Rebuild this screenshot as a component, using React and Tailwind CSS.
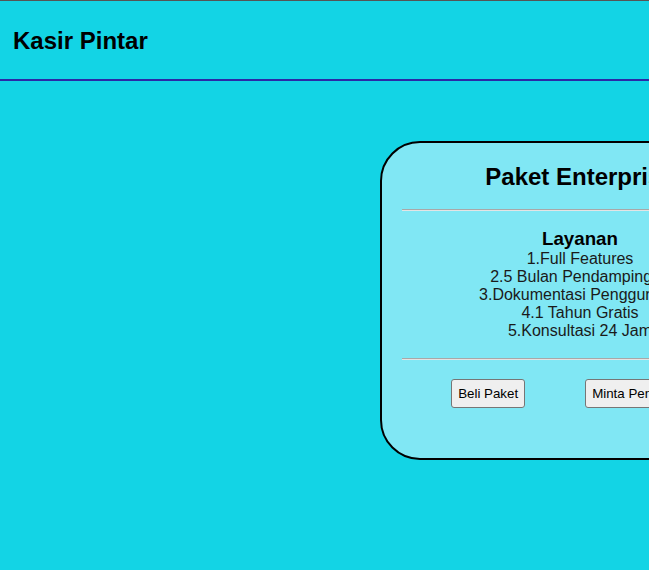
export default function App() {
  const items = [
    "1.Full Features",
    "2.5 Bulan Pendampingan",
    "3.Dokumentasi Penggunaan",
    "4.1 Tahun Gratis",
    "5.Konsultasi 24 Jam",
  ];
  return (
    <div
      className="min-h-screen w-full overflow-hidden bg-[#13d4e5] text-black border-t border-[#555555]"
      style={{ fontFamily: '"Liberation Sans", Arial, sans-serif' }}
    >
      <header className="h-[80px] border-b-2 border-[#2a2aa8] flex items-center pl-[13px]">
        <h1 className="text-[24px] font-bold leading-[28px] mt-[2px]">Kasir Pintar</h1>
      </header>
      <div className="flex pl-[380px] pt-[60px]">
        <div className="shrink-0 w-[400px] h-[319px] rounded-[40px] border-2 border-black bg-[#80e7f4] px-[20px] pt-[20px]">
          <h2 className="text-[24px] font-bold leading-[28px] text-center">Paket Enterprise</h2>
          <div className="mt-[18px] h-[2px] border-t border-t-[#a8a8a8] border-b border-b-[#e4e4e4]" />
          <div className="mt-[17px] text-center">
            <h3 className="text-[18.72px] font-bold leading-[22px]">Layanan</h3>
            {items.map((t) => (
              <div key={t} className="text-[16px] leading-[18px] text-[#1a1a1a]">
                {t}
              </div>
            ))}
          </div>
          <div className="mt-[18px] h-[2px] border-t border-t-[#a8a8a8] border-b border-b-[#e4e4e4]" />
          <div className="mt-[19px] flex justify-center gap-[60px] pr-[6px]">
            <button className="h-[29px] px-[6px] rounded-[3px] border border-[#767676] bg-[#efefef] text-[13.33px] text-black">
              Beli Paket
            </button>
            <button className="h-[29px] px-[6px] rounded-[3px] border border-[#767676] bg-[#efefef] text-[13.33px] text-black">
              Minta Penawaran
            </button>
          </div>
        </div>
      </div>
    </div>
  );
}
